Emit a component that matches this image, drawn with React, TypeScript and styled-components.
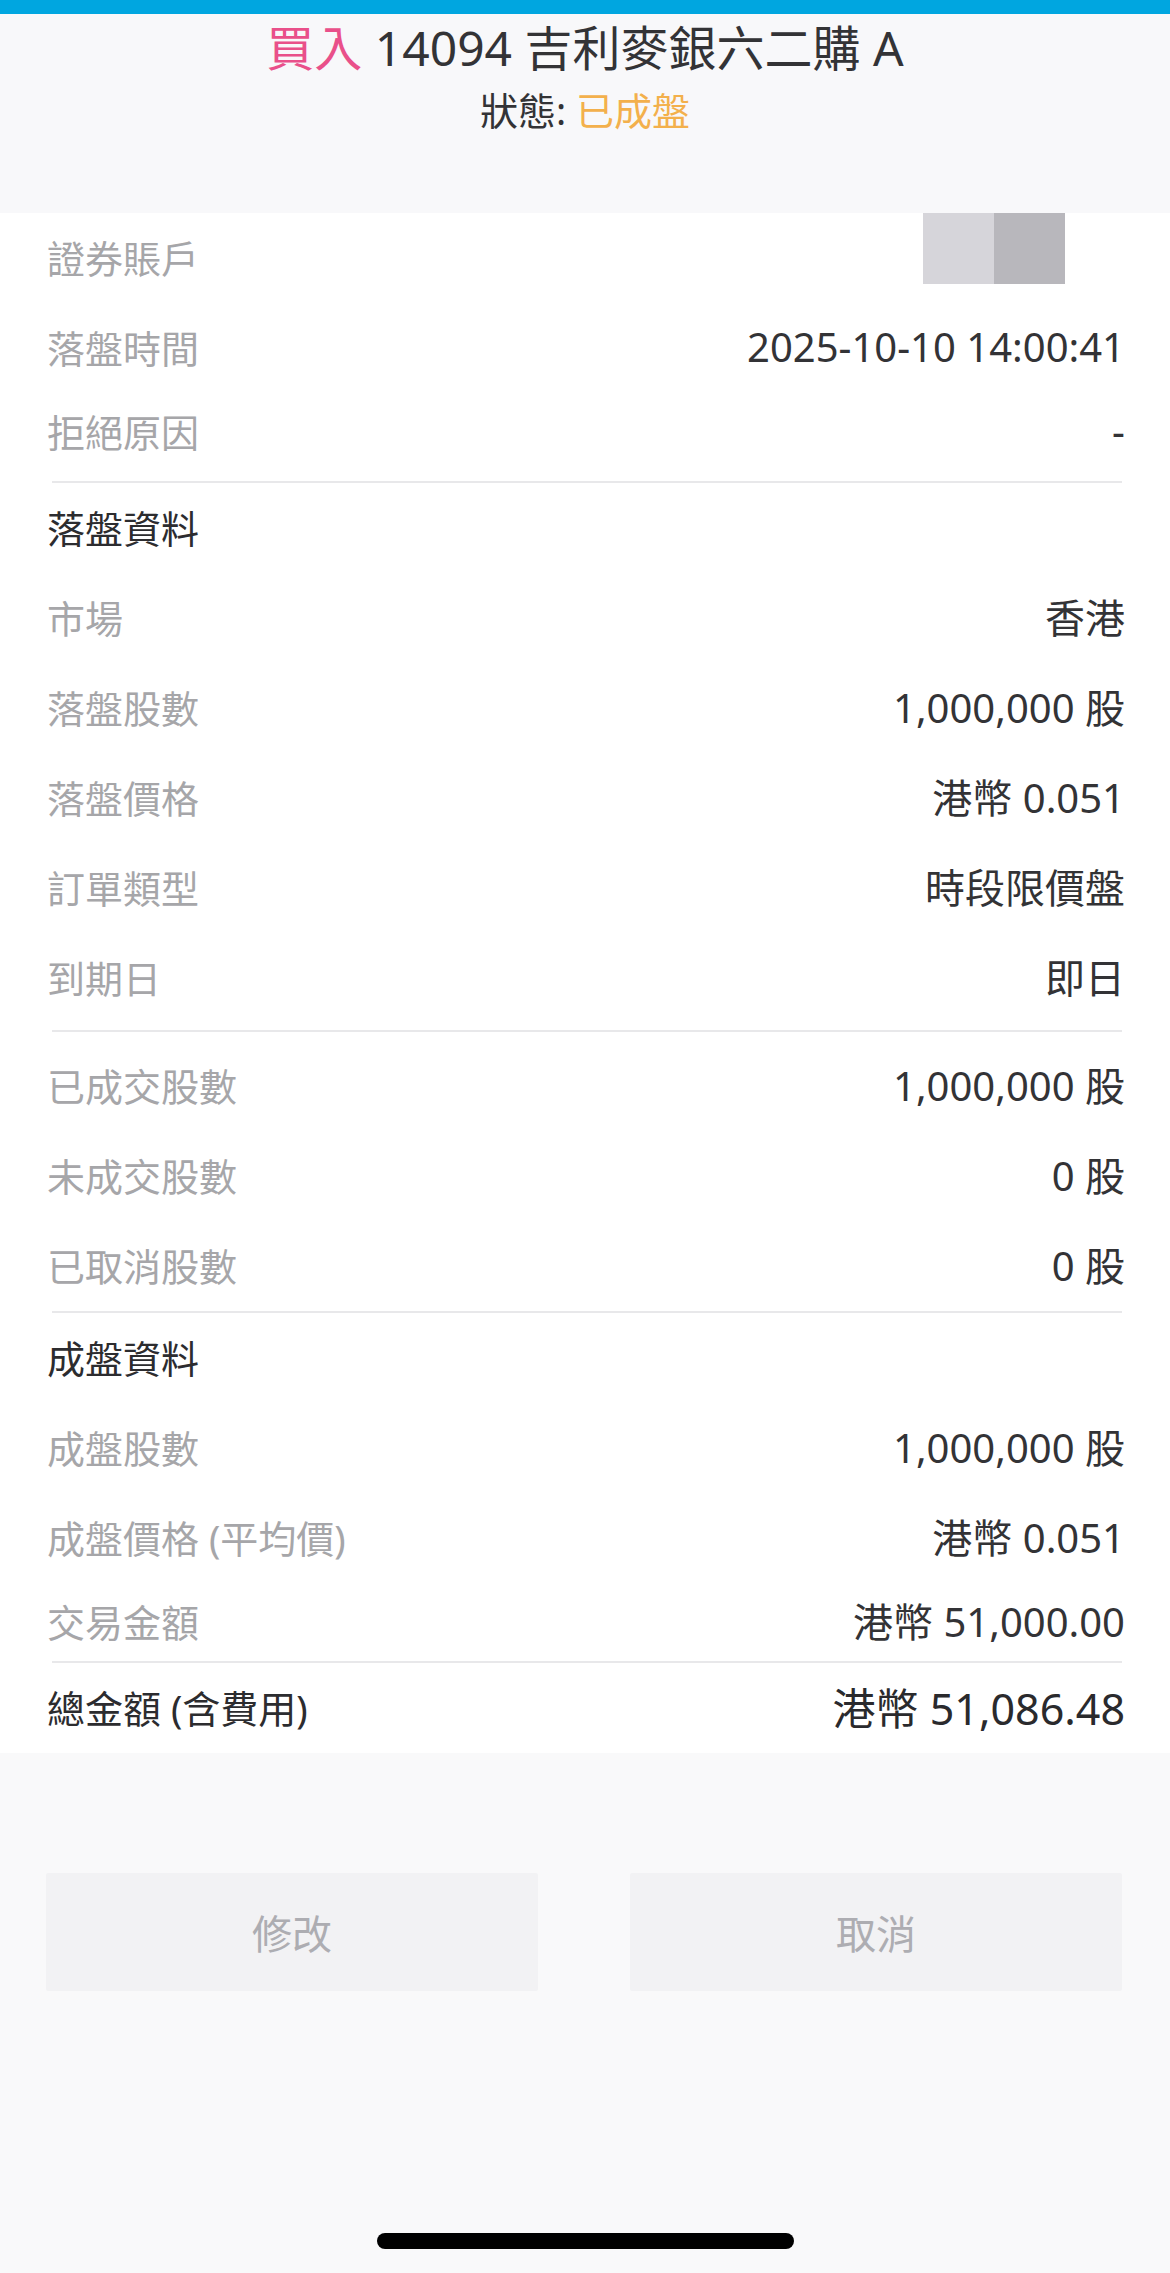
import React from "react";
import styled, { createGlobalStyle } from "styled-components";

const Global = createGlobalStyle`
  html, body { margin: 0; padding: 0; background: #f9f9fa; }
  body { font-family: "Noto Sans", "Noto Sans CJK TC", sans-serif; }
  * { box-sizing: border-box; }
`;

const Page = styled.div`
  width: 1170px;
  min-height: 2273px;
  display: flex;
  flex-direction: column;
  background: #f9f9fa;
`;

const TopBar = styled.div`
  height: 14px;
  background: #00a6e0;
`;

const Header = styled.header`
  height: 199px;
  background: #f8f8fa;
  display: flex;
  flex-direction: column;
  align-items: center;
  padding-top: 6px;
`;

const Title = styled.h1`
  margin: 0;
  font-size: 48px;
  line-height: 56px;
  font-weight: 400;
  color: #333336;
  white-space: pre;
`;

const Side = styled.span`
  color: #e9508a;
`;

const Status = styled.div`
  margin-top: 9px;
  font-size: 38px;
  line-height: 50px;
  color: #333336;
  white-space: pre;
`;

const StatusValue = styled.span`
  color: #f3b04c;
`;

const Card = styled.section`
  background: #ffffff;
  padding: 0 45px 0 47px;
  display: flex;
  flex-direction: column;
`;

const Row = styled.div<{ $h?: number }>`
  height: ${(p) => p.$h ?? 90}px;
  padding-bottom: 4px;
  display: flex;
  align-items: center;
  justify-content: space-between;
`;

const Label = styled.span<{ $strong?: boolean }>`
  font-size: 38px;
  color: ${(p) => (p.$strong ? "#2c2c2f" : "#a6a6a9")};
  white-space: pre;
`;

const Value = styled.span<{ $big?: boolean }>`
  font-size: ${(p) => (p.$big ? 43 : 40)}px;
  color: ${(p) => (p.$big ? "#2a2a2d" : "#333336")};
  white-space: pre;
`;

const Divider = styled.div<{ $mt?: number; $mb?: number }>`
  height: 2px;
  margin: ${(p) => p.$mt ?? 0}px 3px ${(p) => p.$mb ?? 0}px 5px;
  background: #e8e8ea;
`;

const AccountMask = styled.div`
  align-self: flex-start;
  display: flex;
  margin-right: 60px;
`;

const MaskBlock = styled.div<{ $c: string }>`
  width: 71px;
  height: 71px;
  background: ${(p) => p.$c};
`;

const Actions = styled.div`
  margin-top: 120px;
  padding: 0 48px 0 46px;
  display: flex;
  gap: 92px;
`;

const ActionButton = styled.button`
  flex: 1;
  height: 118px;
  border: none;
  border-radius: 2px;
  background: #f2f2f4;
  color: #adadb2;
  font-family: "Noto Sans", "Noto Sans CJK TC", sans-serif;
  font-size: 40px;
`;

const HomeArea = styled.div`
  margin-top: auto;
  padding-bottom: 24px;
  display: flex;
  justify-content: center;
`;

const HomeIndicator = styled.div`
  width: 417px;
  height: 16px;
  border-radius: 8px;
  background: #000;
`;

type Item = { label: string; value: string; h?: number };

const orderInfo: Item[] = [
  { label: "市場", value: "香港" },
  { label: "落盤股數", value: "1,000,000 股" },
  { label: "落盤價格", value: "港幣 0.051" },
  { label: "訂單類型", value: "時段限價盤" },
  { label: "到期日", value: "即日" },
];

const qtyInfo: Item[] = [
  { label: "已成交股數", value: "1,000,000 股" },
  { label: "未成交股數", value: "0 股" },
  { label: "已取消股數", value: "0 股" },
];

const fillInfo: Item[] = [
  { label: "成盤股數", value: "1,000,000 股" },
  { label: "成盤價格 (平均價)", value: "港幣 0.051" },
  { label: "交易金額", value: "港幣 51,000.00", h: 78 },
];

const Rows = ({ items }: { items: Item[] }) => (
  <>
    {items.map((it) => (
      <Row key={it.label} $h={it.h}>
        <Label>{it.label}</Label>
        <Value>{it.value}</Value>
      </Row>
    ))}
  </>
);

export default function App() {
  return (
    <Page>
      <Global />
      <TopBar />
      <Header>
        <Title>
          <Side>買入</Side> 14094 吉利麥銀六二購 A
        </Title>
        <Status>
          狀態: <StatusValue>已成盤</StatusValue>
        </Status>
      </Header>
      <Card>
        <Row>
          <Label>證券賬戶</Label>
          <AccountMask>
            <MaskBlock $c="#d6d5da" />
            <MaskBlock $c="#b8b7bc" />
          </AccountMask>
        </Row>
        <Row>
          <Label>落盤時間</Label>
          <Value>2025-10-10 14:00:41</Value>
        </Row>
        <Row $h={78}>
          <Label>拒絕原因</Label>
          <Value>-</Value>
        </Row>
        <Divider $mt={10} />
        <Row>
          <Label $strong>落盤資料</Label>
        </Row>
        <Rows items={orderInfo} />
        <Divider $mt={7} $mb={9} />
        <Rows items={qtyInfo} />
        <Divider />
        <Row>
          <Label $strong>成盤資料</Label>
        </Row>
        <Rows items={fillInfo} />
        <Divider />
        <Row>
          <Label $strong>總金額 (含費用)</Label>
          <Value $big>港幣 51,086.48</Value>
        </Row>
      </Card>
      <Actions>
        <ActionButton>修改</ActionButton>
        <ActionButton>取消</ActionButton>
      </Actions>
      <HomeArea>
        <HomeIndicator />
      </HomeArea>
    </Page>
  );
}
